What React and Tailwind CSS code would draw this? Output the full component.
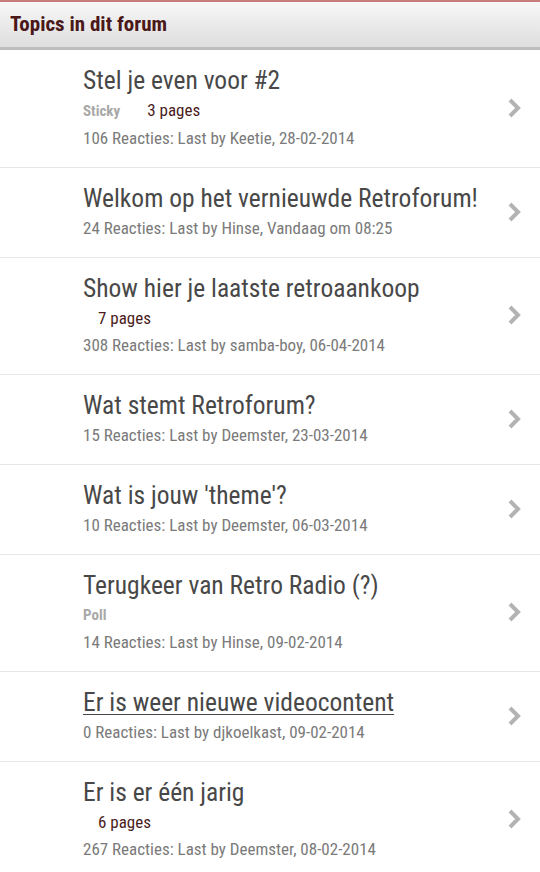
import React from "react";

const topics = [
  { title: "Stel je even voor #2", sticky: true, pages: "3 pages", meta: "106 Reacties: Last by Keetie, 28-02-2014" },
  { title: "Welkom op het vernieuwde Retroforum!", meta: "24 Reacties: Last by Hinse, Vandaag om 08:25" },
  { title: "Show hier je laatste retroaankoop", pages: "7 pages", meta: "308 Reacties: Last by samba-boy, 06-04-2014" },
  { title: "Wat stemt Retroforum?", meta: "15 Reacties: Last by Deemster, 23-03-2014" },
  { title: "Wat is jouw 'theme'?", meta: "10 Reacties: Last by Deemster, 06-03-2014" },
  { title: "Terugkeer van Retro Radio (?)", poll: true, meta: "14 Reacties: Last by Hinse, 09-02-2014" },
  { title: "Er is weer nieuwe videocontent", underline: true, meta: "0 Reacties: Last by djkoelkast, 09-02-2014" },
  { title: "Er is er één jarig", pages: "6 pages", meta: "267 Reacties: Last by Deemster, 08-02-2014" },
];

function Chevron() {
  return (
    <svg width="16" height="22" viewBox="0 0 16 22" className="shrink-0">
      <path d="M4 3 L12 11 L4 19" fill="none" stroke="#b3b3b3" strokeWidth="4" strokeLinecap="butt" strokeLinejoin="miter" />
    </svg>
  );
}

function TopicRow({ t }) {
  return (
    <li className="flex items-center border-b border-[#e6e6e6] pl-[83px] pr-[18px] pt-[13px] pb-[15px]">
      <div className="flex-1 min-w-0">
        <div className={"text-[25.5px] leading-[34px] text-[#484848] whitespace-nowrap " + (t.underline ? "underline decoration-1 underline-offset-[3px]" : "")}>
          {t.title}
        </div>
        {(t.sticky || t.pages) && (
          <div className="flex items-baseline leading-[27px]">
            {t.sticky && <span className="text-[15px] font-bold text-[#a8a8a8]">Sticky</span>}
            <span className={"text-[17px] text-[#4b1c1c] " + (t.sticky ? "ml-[27px]" : "ml-[15px]")}>{t.pages}</span>
          </div>
        )}
        {t.poll && <div className="text-[15px] leading-[27px] font-bold text-[#a8a8a8]">Poll</div>}
        <div className="text-[17px] leading-[27px] text-[#7a7a7a] whitespace-nowrap">{t.meta}</div>
      </div>
      <Chevron />
    </li>
  );
}

export default function App() {
  return (
    <div className="w-[540px] min-h-[872px] bg-white" style={{ fontFamily: '"Liberation Sans Narrow", "Roboto Condensed", Roboto, sans-serif' }}>
      <header className="h-[50px] border-t-2 border-[#c77b7b] border-b-[3px] border-b-[#bdbdbd] bg-gradient-to-b from-[#f7f7f7] to-[#dedede] flex items-center px-[10px]">
        <h1 className="text-[21px] font-bold text-[#4a1818] pt-[1px]">Topics in dit forum</h1>
      </header>
      <ul>
        {topics.map((t, i) => (
          <TopicRow key={i} t={t} />
        ))}
      </ul>
    </div>
  );
}
